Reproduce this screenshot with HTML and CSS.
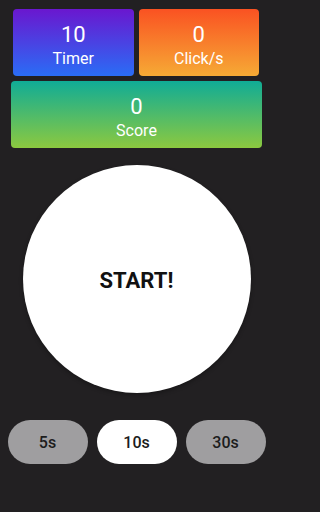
FILE: index.html
```html
<!DOCTYPE html>
<html>
<head>
<meta charset="utf-8">
<link rel="stylesheet" href="styles.css">
</head>
<body>
<div class="app">
  <div class="top-row">
    <div class="card card-timer">
      <div class="value">10</div>
      <div class="label">Timer</div>
    </div>
    <div class="card card-clicks">
      <div class="value">0</div>
      <div class="label">Click/s</div>
    </div>
  </div>
  <div class="card card-score">
    <div class="value">0</div>
    <div class="label">Score</div>
  </div>
  <div class="circle-wrap">
    <div class="start">START!</div>
  </div>
  <div class="modes">
    <div class="mode">5s</div>
    <div class="mode mode-active">10s</div>
    <div class="mode">30s</div>
  </div>
</div>
</body>
</html>
```

FILE: styles.css
```css
html, body {
  margin: 0;
  padding: 0;
  background: #222022;
}
.app {
  width: 273px;
  height: 512px;
  font-family: Roboto, "Liberation Sans", sans-serif;
  color: #fff;
  overflow: hidden;
}
.top-row {
  display: flex;
  gap: 5px;
  margin: 9px 14px 0 13px;
}
.card {
  box-sizing: border-box;
  height: 67px;
  border-radius: 4px;
  padding-top: 12px;
  text-align: center;
}
.top-row .card {
  flex: 1;
}
.card-timer {
  background: linear-gradient(to bottom, #6a17cf, #2a6df6);
}
.card-clicks {
  background: linear-gradient(to bottom, #fa5222, #f6aa35);
}
.card-score {
  margin: 5px 11px 0 11px;
  background: linear-gradient(to bottom, #10ac96, #8cc93f);
}
.value {
  font-size: 22px;
  line-height: 27px;
}
.label {
  font-size: 16px;
  line-height: 22px;
}
.circle-wrap {
  width: 228px;
  height: 228px;
  margin: 17px auto 0 auto;
  border-radius: 50%;
  background: #fff;
  display: flex;
  align-items: center;
  justify-content: center;
  box-shadow: 0 2px 4px rgba(0,0,0,0.3);
}
.start {
  color: #111;
  font-weight: 700;
  font-size: 22px;
  padding-top: 2px;
}
.modes {
  display: flex;
  justify-content: center;
  gap: 9px;
  margin-top: 27px;
}
.mode {
  width: 80px;
  height: 44px;
  border-radius: 22px;
  background: #9f9ea0;
  color: #1c1c1c;
  font-size: 16px;
  font-weight: 500;
  display: flex;
  align-items: center;
  justify-content: center;
}
.mode-active {
  background: #fff;
}
```
